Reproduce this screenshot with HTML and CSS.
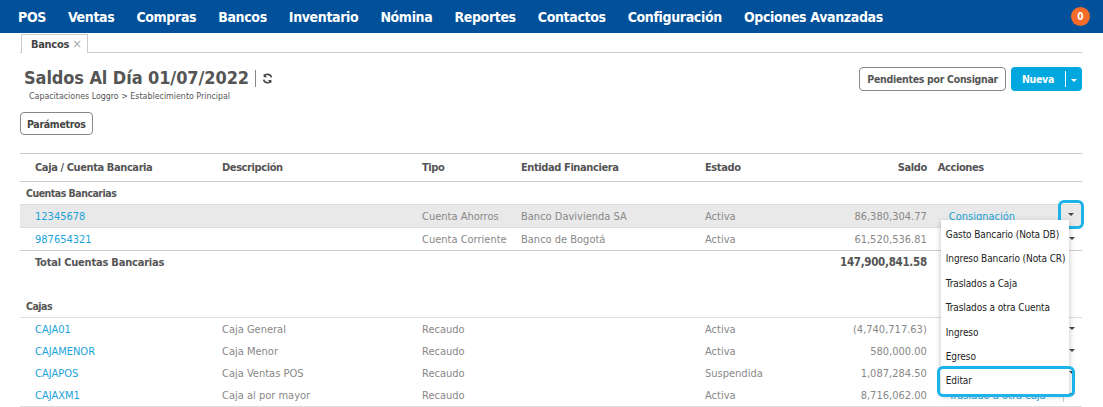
FILE: index.html
```html
<!DOCTYPE html>
<html lang="es">
<head>
  <meta charset="UTF-8" />
  <title>Bancos - Loggro</title>
  <link rel="stylesheet" href="styles.css">
</head>
<body>
  <header class="navbar">
    <nav>
      <a href="#">POS</a>
      <a href="#">Ventas</a>
      <a href="#">Compras</a>
      <a href="#">Bancos</a>
      <a href="#">Inventario</a>
      <a href="#">Nómina</a>
      <a href="#">Reportes</a>
      <a href="#">Contactos</a>
      <a href="#">Configuración</a>
      <a href="#">Opciones Avanzadas</a>
    </nav>
    <span class="badge">0</span>
  </header>

  <div class="tabs">
    <div class="tab">Bancos <span class="cerrar">&times;</span></div>
  </div>

  <main>
    <div class="cabecera">
      <div>
        <h1>Saldos Al Día 01/07/2022 <span class="sep"></span>
          <svg class="refresh" width="11" height="11" viewBox="0 0 16 16">
            <path d="M13.5 6.5A5.7 5.7 0 0 0 3 4.6" fill="none" stroke="#444" stroke-width="2.4"/>
            <path d="M2.5 1v5h5z" fill="#444"/>
            <path d="M2.5 9.5A5.7 5.7 0 0 0 13 11.4" fill="none" stroke="#444" stroke-width="2.4"/>
            <path d="M13.5 15v-5h-5z" fill="#444"/>
          </svg>
        </h1>
        <div class="ruta">Capacitaciones Loggro &gt; Establecimiento Principal</div>
      </div>
      <div class="botones">
        <button class="btn">Pendientes por Consignar</button>
        <div class="btn-grupo">
          <button class="btn-azul">Nueva</button>
          <button class="btn-azul caret-btn"><span class="caret blanco"></span></button>
        </div>
      </div>
    </div>

    <button class="btn parametros">Parámetros</button>

    <table class="saldos">
      <thead>
        <tr>
          <th class="c1">Caja / Cuenta Bancaria</th>
          <th class="c2">Descripción</th>
          <th class="c3">Tipo</th>
          <th class="c4">Entidad Financiera</th>
          <th class="c5">Estado</th>
          <th class="c6 num">Saldo</th>
          <th class="c7">Acciones</th>
        </tr>
      </thead>
      <tbody>
        <tr class="grupo"><td colspan="7">Cuentas Bancarias</td></tr>
        <tr class="activa">
          <td class="c1"><a href="#">12345678</a></td>
          <td></td>
          <td>Cuenta Ahorros</td>
          <td>Banco Davivienda SA</td>
          <td>Activa</td>
          <td class="num">86,380,304.77</td>
          <td class="acciones">
            <a href="#">Consignación</a>
            <span class="toggle foco"><span class="caret"></span></span>
            <ul class="menu">
              <li>Gasto Bancario (Nota DB)</li>
              <li>Ingreso Bancario (Nota CR)</li>
              <li>Traslados a Caja</li>
              <li>Traslados a otra Cuenta</li>
              <li>Ingreso</li>
              <li>Egreso</li>
              <li class="foco">Editar</li>
            </ul>
          </td>
        </tr>
        <tr>
          <td class="c1"><a href="#">987654321</a></td>
          <td></td>
          <td>Cuenta Corriente</td>
          <td>Banco de Bogotá</td>
          <td>Activa</td>
          <td class="num">61,520,536.81</td>
          <td class="acciones"><a href="#">Consignación</a><span class="toggle"><span class="caret"></span></span></td>
        </tr>
        <tr class="total">
          <td colspan="5">Total Cuentas Bancarias</td>
          <td class="num">147,900,841.58</td>
          <td></td>
        </tr>
        <tr class="vacia"><td colspan="7"></td></tr>
        <tr class="grupo"><td colspan="7">Cajas</td></tr>
        <tr>
          <td class="c1"><a href="#">CAJA01</a></td>
          <td>Caja General</td>
          <td>Recaudo</td>
          <td></td>
          <td>Activa</td>
          <td class="num">(4,740,717.63)</td>
          <td class="acciones"><a href="#">Traslado a otra caja</a><span class="toggle"><span class="caret"></span></span></td>
        </tr>
        <tr>
          <td class="c1"><a href="#">CAJAMENOR</a></td>
          <td>Caja Menor</td>
          <td>Recaudo</td>
          <td></td>
          <td>Activa</td>
          <td class="num">580,000.00</td>
          <td class="acciones"><a href="#">Traslado a otra caja</a><span class="toggle"><span class="caret"></span></span></td>
        </tr>
        <tr>
          <td class="c1"><a href="#">CAJAPOS</a></td>
          <td>Caja Ventas POS</td>
          <td>Recaudo</td>
          <td></td>
          <td>Suspendida</td>
          <td class="num">1,087,284.50</td>
          <td class="acciones"><a href="#">Traslado a otra caja</a><span class="toggle"><span class="caret"></span></span></td>
        </tr>
        <tr>
          <td class="c1"><a href="#">CAJAXM1</a></td>
          <td>Caja al por mayor</td>
          <td>Recaudo</td>
          <td></td>
          <td>Activa</td>
          <td class="num">8,716,062.00</td>
          <td class="acciones"><a href="#">Traslado a otra caja</a><span class="toggle"><span class="caret"></span></span></td>
        </tr>
      </tbody>
    </table>
  </main>
</body>
</html>
```

FILE: styles.css
```css
body {
  font-family: "DejaVu Sans Condensed", "DejaVu Sans", sans-serif;
  margin: 0;
  background: white;
  color: #555;
  font-size: 11px;
}

.navbar {
  background: #00509a;
  height: 33px;
  display: flex;
  align-items: center;
  padding: 0 13px 0 18px;
}

.navbar nav {
  display: flex;
  gap: 22px;
}

.navbar a {
  color: white;
  text-decoration: none;
  font-weight: bold;
  font-size: 14px;
  letter-spacing: -0.35px;
}

.badge {
  margin-left: auto;
  width: 19px;
  height: 19px;
  border-radius: 50%;
  background: #f46b2a;
  color: white;
  font-size: 10px;
  font-weight: bold;
  display: flex;
  align-items: center;
  justify-content: center;
}

.tabs {
  margin: 0 21px 0 20px;
  border-bottom: 1px solid #ccc;
  height: 19px;
  display: flex;
  align-items: flex-end;
}

.tab {
  margin-left: 1px;
  height: 18px;
  padding: 0 5px 0 9px;
  border: 1px solid #ccc;
  border-bottom: none;
  font-weight: bold;
  font-size: 11px;
  letter-spacing: -0.3px;
  color: #444;
  line-height: 17px;
  margin-bottom: -1px;
  background: white;
}

.cerrar {
  color: #aaa;
  font-weight: normal;
  font-size: 13px;
}

main {
  padding: 0 21px 0 20px;
}

.cabecera {
  display: flex;
  justify-content: space-between;
  align-items: flex-start;
  padding-top: 14px;
}

h1 {
  margin: 0 0 0 4px;
  font-size: 18px;
  letter-spacing: -0.1px;
  color: #555;
  display: flex;
  align-items: center;
  gap: 6px;
  line-height: 22px;
}

.sep {
  width: 1px;
  height: 17px;
  background: #888;
  display: inline-block;
}

.ruta {
  font-size: 8.8px;
  color: #555;
  margin: 2px 0 0 9px;
}

.botones {
  display: flex;
  gap: 5px;
  padding-top: 0;
}

.btn {
  font-family: inherit;
  font-weight: bold;
  font-size: 10.5px;
  letter-spacing: -0.3px;
  color: #555;
  background: white;
  border: 1px solid #888;
  border-radius: 4px;
  height: 24px;
  padding: 0 7px;
}

.btn-grupo {
  display: flex;
  background: #00a8df;
  border-radius: 4px;
  height: 24px;
}

.btn-azul {
  font-family: inherit;
  background: none;
  border: none;
  color: white;
  font-weight: bold;
  font-size: 10.5px;
  letter-spacing: -0.3px;
  padding: 0 11px 0 11px;
}

.caret-btn {
  padding: 0 5px;
  border-left: 1px solid white;
  margin: 4px 0;
}

.caret {
  display: inline-block;
  border-left: 3px solid transparent;
  border-right: 3px solid transparent;
  border-top: 3px solid #444;
  vertical-align: middle;
}

.caret.blanco {
  border-top-color: white;
}

.parametros {
  margin-top: 11px;
  height: 23px;
  padding: 0 6px;
  color: #444;
}

.saldos {
  width: 100%;
  border-collapse: collapse;
  margin-top: 18px;
  border-top: 1px solid #ccc;
}

.saldos th {
  text-align: left;
  font-size: 11px;
  letter-spacing: -0.4px;
  color: #555;
  height: 27px;
  border-bottom: 1px solid #ccc;
  padding: 0;
}

.saldos td {
  height: 22px;
  padding: 0;
  color: #888;
  white-space: nowrap;
}

.saldos th.c1, .saldos td.c1 {
  padding-left: 15px;
}

.c1 { width: 187px; }
.c2 { width: 200px; }
.c3 { width: 99px; }
.c4 { width: 184px; }
.c5 { width: 120px; }
.c6 { width: 99px; }

.saldos .num {
  text-align: right;
}

.saldos th.c7 {
  padding-left: 11px;
}

.saldos a {
  color: #1aa3d8;
  text-decoration: none;
}

.saldos tr.grupo td {
  font-weight: bold;
  font-size: 10.5px;
  letter-spacing: -0.5px;
  color: #555;
  padding-left: 6px;
  border-bottom: 1px solid #ddd;
}

.saldos tr.activa td {
  background: #e9e9e9;
  border-bottom: 1px solid #ddd;
}

.saldos tr.total td {
  border-top: 1px solid #ccc;
  font-weight: bold;
  letter-spacing: -0.2px;
  color: #555;
  padding-left: 15px;
}

.saldos tr.total td.num {
  font-size: 11.5px;
  letter-spacing: -0.3px;
}

.saldos tr:last-child td {
  border-bottom: 1px solid #ddd;
}

.saldos td.acciones {
  position: relative;
  padding-left: 22px;
}

.toggle {
  position: absolute;
  right: 3px;
  top: 4px;
  width: 15px;
  height: 14px;
  border-left: 1px solid #ccc;
  text-align: center;
  line-height: 11px;
}

.toggle.foco {
  border: none;
  width: 20px;
  height: 23px;
  top: -2px;
  right: 1px;
  line-height: 21px;
  outline: 3px solid #1cb3ea;
  border-radius: 3px;
}

.menu {
  position: absolute;
  left: 14px;
  top: 15px;
  z-index: 2;
  margin: 0;
  padding: 3px 0 0;
  list-style: none;
  width: 128px;
  background: white;
  box-shadow: 0 2px 6px rgba(0,0,0,0.25);
}

.menu li {
  color: #222;
  font-size: 10px;
  letter-spacing: -0.1px;
  height: 24.4px;
  line-height: 24px;
  padding-left: 5px;
}

.menu li.foco {
  outline: 3px solid #1cb3ea;
  border-radius: 3px;
  margin: 0 -3px 0 -1px;
  padding-left: 6px;
}
```
